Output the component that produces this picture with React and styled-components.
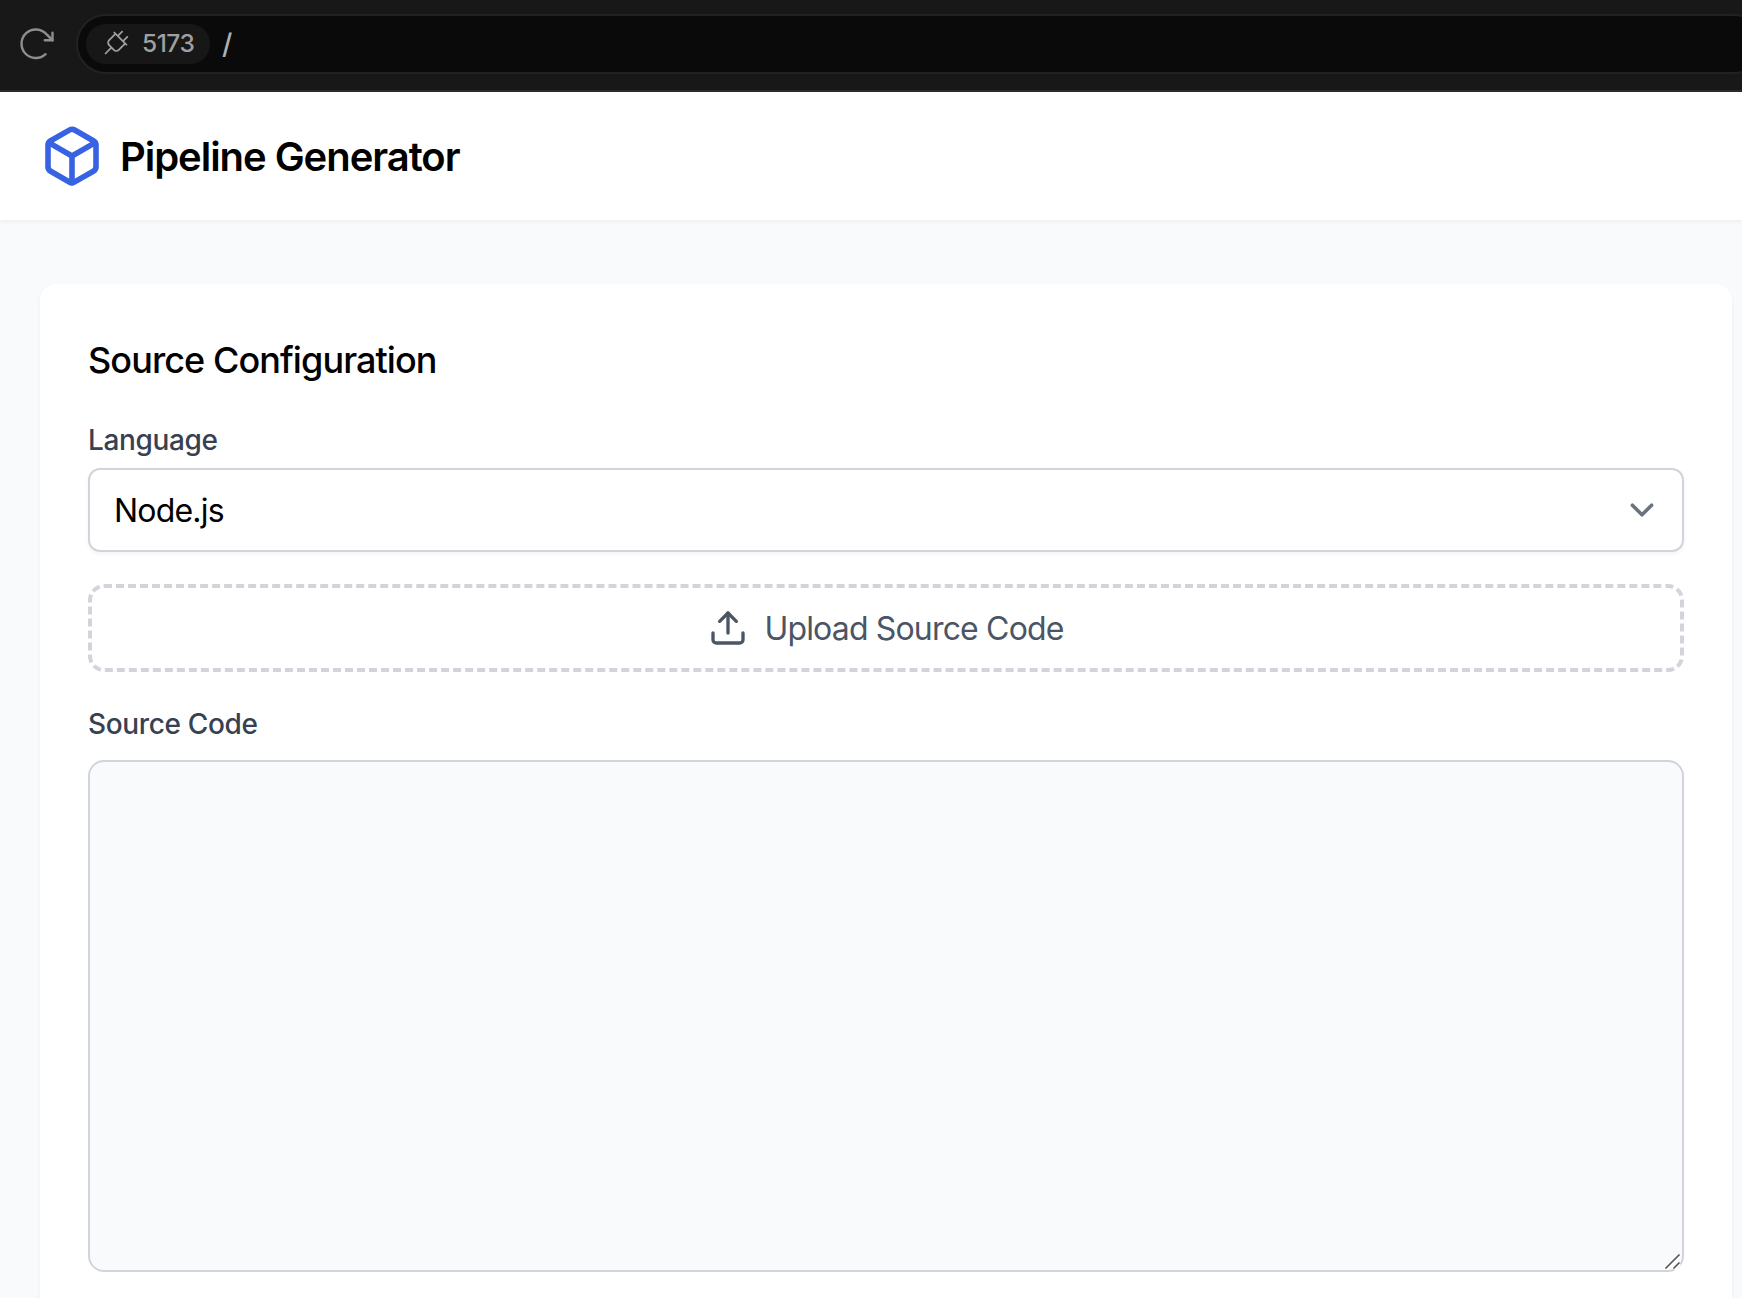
import React, { useState } from "react";
import styled, { createGlobalStyle } from "styled-components";
import { Box, Upload } from "lucide-react";
import { PiPlug } from "react-icons/pi";

const Global = createGlobalStyle`
  *, *::before, *::after { box-sizing: border-box; }
  html, body { margin: 0; height: 100%; overflow: hidden; }
  body { background: #f9fafb; font-family: Inter, "Liberation Sans", sans-serif; }
  h1, h2 { margin: 0; }
`;

const Browser = styled.div`
  display: flex;
  flex-direction: column;
  height: 100vh;
  overflow: hidden;
`;

const Toolbar = styled.div`
  flex: none;
  display: flex;
  align-items: center;
  gap: 20px;
  height: 92px;
  padding: 0 0 2px 16px;
  background: #181818;
  border-bottom: 2px solid #2b2b2c;
`;

const ReloadButton = styled.button`
  flex: none;
  display: flex;
  padding: 0;
  border: 0;
  background: none;
  color: #8e8e8e;
`;

const AddressBar = styled.div`
  flex: none;
  display: flex;
  align-items: center;
  gap: 12px;
  width: 1688px;
  height: 60px;
  padding-left: 8px;
  border: 2px solid #222222;
  border-radius: 30px;
  background: #0a0a0a;
`;

const PortChip = styled.span`
  display: flex;
  align-items: center;
  gap: 12px;
  width: 124px;
  height: 40px;
  padding: 0 0 2px 16px;
  border-radius: 20px;
  background: #171717;
  color: #a0a0a0;
  font-size: 24.5px;
  font-weight: 450;
  letter-spacing: -0.5px;

  svg {
    flex: none;
    font-size: 28px;
  }
`;

const UrlPath = styled.span`
  color: #b0b0b0;
  font-size: 28px;
  font-weight: 450;
`;

const Header = styled.header`
  flex: none;
  display: flex;
  align-items: center;
  gap: 16px;
  height: 128px;
  padding: 0 40px;
  background: #fff;
  box-shadow: 0 2px 4px rgba(0, 0, 0, 0.05);
`;

const Title = styled.h1`
  padding-top: 2px;
  font-size: 40px;
  line-height: 56px;
  font-weight: 600;
  letter-spacing: -1.04px;
  color: #000;
`;

const Main = styled.main`
  flex: 1;
  min-height: 0;
  padding: 64px 10px 0 40px;
`;

const Card = styled.section`
  display: flex;
  flex-direction: column;
  height: 1300px;
  padding: 48px;
  border-radius: 16px;
  background: #fff;
  box-shadow: 0 2px 4px rgba(0, 0, 0, 0.05);
`;

const SectionTitle = styled.h2`
  margin-bottom: 32px;
  font-size: 36px;
  line-height: 56px;
  font-weight: 550;
  letter-spacing: -0.92px;
  color: #000;
`;

const FieldLabel = styled.label`
  font-size: 28px;
  line-height: 40px;
  font-weight: 500;
  letter-spacing: -0.35px;
  color: #374151;
`;

const SelectBox = styled.div`
  display: flex;
  align-items: center;
  justify-content: space-between;
  height: 84px;
  margin: 8px 0 32px;
  padding: 0 16px 0 24px;
  border: 2px solid #d1d5db;
  border-radius: 12px;
  background: #fff;
  box-shadow: 0 2px 4px rgba(0, 0, 0, 0.05);
  color: #6b7280;
`;

const SelectValue = styled.span`
  padding-top: 2px;
  font-size: 32px;
  line-height: 48px;
  letter-spacing: -0.8px;
  color: #000;
`;

const UploadButton = styled.button`
  display: flex;
  align-items: center;
  justify-content: center;
  gap: 16px;
  height: 88px;
  margin-bottom: 32px;
  border: 4px dashed #d1d5db;
  border-radius: 16px;
  background: none;
  font-family: inherit;
  font-size: 32px;
  line-height: 48px;
  letter-spacing: -0.83px;
  color: #4b5563;
`;

const UploadText = styled.span`
  padding-top: 2px;
`;

const CodeField = styled.div`
  position: relative;
  display: flex;
  height: 512px;
  margin-top: 16px;
`;

const CodeArea = styled.textarea`
  flex: 1;
  padding: 24px;
  border: 2px solid #d1d5db;
  border-radius: 16px;
  background: #f9fafb;
  font-family: "Liberation Mono", monospace;
  font-size: 28px;
  outline: none;
  resize: none;
`;

const ResizeGrip = styled.svg`
  position: absolute;
  right: 3px;
  bottom: 2px;
  pointer-events: none;
`;

function Reload() {
  return (
    <svg width="40" height="40" viewBox="0 0 40 40" fill="none" stroke="currentColor"
      strokeWidth="2.4" strokeLinecap="round" strokeLinejoin="miter">
      <path d="M29.6 30.2A14.3 14.3 0 1 1 30.4 10.1L36.4 16.2" />
      <path d="M28.8 16.3H36.500V8.700" />
    </svg>
  );
}

function Chevron() {
  return (
    <svg width="48" height="48" viewBox="0 0 20 20" fill="none" stroke="currentColor"
      strokeWidth="1.5" strokeLinecap="round" strokeLinejoin="round">
      <path d="M6 8l4 4 4-4" />
    </svg>
  );
}

function Grip() {
  return (
    <ResizeGrip width="17" height="18" viewBox="0 0 17 18" fill="none">
      <path d="M3 17.5L16 4.5M10.5 17.5L16 12" stroke="#fff" strokeWidth="3" />
      <path d="M1.5 16.5L15.5 2.5M9.5 16.5L15.5 10.5" stroke="#555" strokeWidth="1.6" />
    </ResizeGrip>
  );
}

export default function App() {
  const [source, setSource] = useState("");
  return (
    <Browser>
      <Global />
      <Toolbar>
        <ReloadButton aria-label="Reload"><Reload /></ReloadButton>
        <AddressBar>
          <PortChip><PiPlug />5173</PortChip>
          <UrlPath>/</UrlPath>
        </AddressBar>
      </Toolbar>
      <Header>
        <Box size={64} color="#3662e3" strokeWidth={2.1} />
        <Title>Pipeline Generator</Title>
      </Header>
      <Main>
        <Card>
          <SectionTitle>Source Configuration</SectionTitle>
          <FieldLabel>Language</FieldLabel>
          <SelectBox>
            <SelectValue>Node.js</SelectValue>
            <Chevron />
          </SelectBox>
          <UploadButton>
            <Upload size={40} />
            <UploadText>Upload Source Code</UploadText>
          </UploadButton>
          <FieldLabel htmlFor="source">Source Code</FieldLabel>
          <CodeField>
            <CodeArea id="source" value={source} onChange={(e) => setSource(e.target.value)} />
            <Grip />
          </CodeField>
        </Card>
      </Main>
    </Browser>
  );
}
